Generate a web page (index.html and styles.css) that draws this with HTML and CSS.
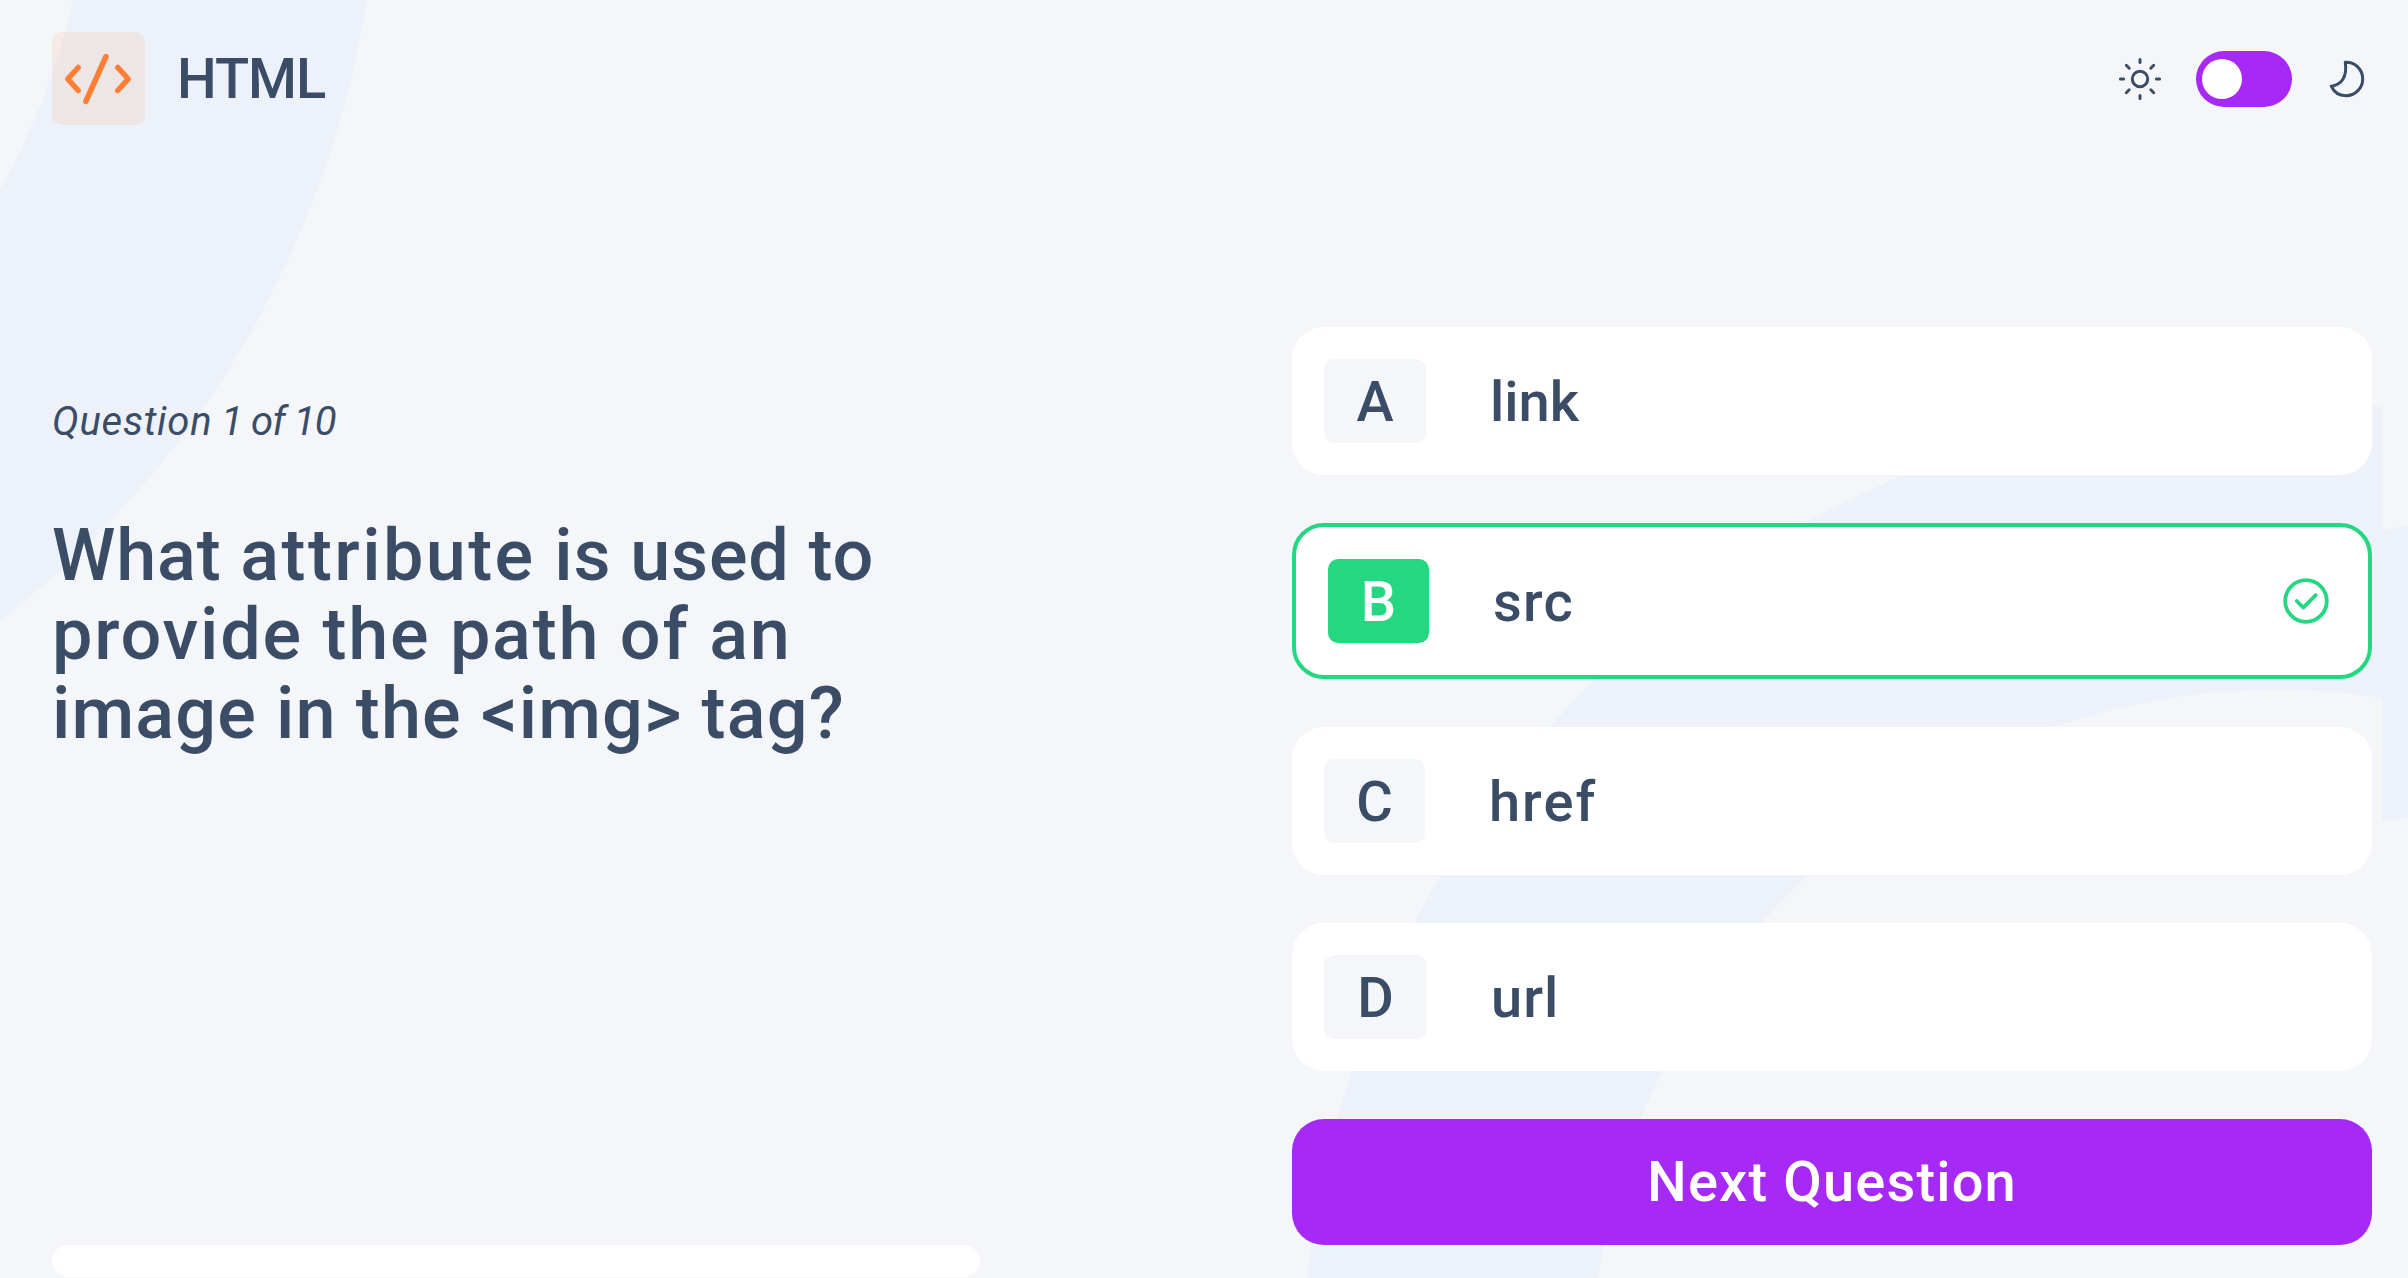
FILE: index.html
```
<!DOCTYPE html>
<html lang="en">
<head>
<meta charset="utf-8">
<title>Frontend Quiz</title>
<link rel="stylesheet" href="styles.css">
</head>
<body>
<svg class="backdrop" viewBox="0 0 2408 1278" aria-hidden="true">
  <defs>
    <clipPath id="tile"><rect width="2382" height="1278"/></clipPath>
    <clipPath id="next-tile"><rect x="2382" width="26" height="1278"/></clipPath>
  </defs>
  <g clip-path="url(#tile)">
    <circle cx="-595.5" cy="-149.8" r="829.5"/>
    <circle cx="2276.5" cy="1375" r="829.5"/>
  </g>
  <g clip-path="url(#next-tile)"><circle cx="2287" cy="-148.500" r="829.5"/></g>
</svg>
<div class="page">
  <header class="header">
    <div class="subject">
      <span class="subject-icon">
        <svg width="93" height="93" viewBox="0 0 93 93"><path d="M26.2 35.5 15.8 47l10.4 11.5M65.8 35.5 76.2 47 65.8 58.5M54 24.5 33.8 69.5"/></svg>
      </span>
      <span class="subject-name">HTML</span>
    </div>
    <div class="theme">
      <svg class="sun" width="48" height="48" viewBox="0 0 48 48"><circle cx="24" cy="24" r="7.7"/><path d="M24 4.4v3.2M24 40.4v3.2M4.4 24h3.2M40.4 24h3.2M10.3 10.3l2.9 2.9M34.8 34.8l2.9 2.9M10.3 37.7l2.9-2.9M34.8 13.2l2.9-2.9"/></svg>
      <button class="switch" aria-label="Toggle theme"><span class="knob"></span></button>
      <svg class="moon" width="48" height="48" viewBox="0 0 48 48"><path d="M23.3 7.3C33 6.8 40.700 14.500 40.700 24C40.700 33.500 33 40.700 24 40.700C17.500 40.700 11.800 37.200 9.300 31.200C19 30 25.500 22.500 23.300 7.300Z"/></svg>
    </div>
  </header>
  <main class="quiz">
    <section class="question">
      <div>
        <p class="counter"><span class="counter-word">Question</span> 1 of 10</p>
        <h1 class="prompt"><span class="l1">What <span class="wide">attribute</span> is used to</span><br><span class="l2">provide the path of an</span><br><span class="l3">image in the &lt;img&gt; tag?</span></h1>
      </div>
      <div class="progress"></div>
    </section>
    <section class="answers">
      <button class="answer"><span class="badge a">A</span><span class="label link">link</span></button>
      <button class="answer correct"><span class="badge b">B</span><span class="label src">src</span>
        <svg class="tick" width="48" height="48" viewBox="0 0 48 48"><circle cx="24" cy="24" r="20.800"/><path d="M14.700 24l6.600 6.600L33.700 18.200"/></svg>
      </button>
      <button class="answer"><span class="badge c">C</span><span class="label href">href</span></button>
      <button class="answer"><span class="badge d">D</span><span class="label url">url</span></button>
      <button class="next"><span>Next Question</span></button>
    </section>
  </main>
</div>
</body>
</html>
```
FILE: styles.css
```
* { box-sizing: border-box; }
body {
  margin: 0;
  background: #f4f6fa;
  color: #3b4d66;
  font-family: Roboto, "Liberation Sans", sans-serif;
  overflow: hidden;
}
button { border: 0; padding: 0; font: inherit; color: inherit; }
svg { display: block; fill: none; stroke-linecap: round; stroke-linejoin: round; }

.backdrop { position: absolute; inset: 0; width: 2408px; height: 1278px; z-index: -1; }
.backdrop circle { stroke: #edf1fa; stroke-width: 288.5; }

.page { width: 2408px; height: 1278px; padding: 32px 36px 1px 52px; display: flex; flex-direction: column; }
.header { display: flex; justify-content: space-between; align-items: center; height: 93px; }
.subject { display: flex; align-items: center; gap: 32px; }
.subject-icon { width: 93px; height: 93px; border-radius: 10px; background: rgba(255, 126, 53, 0.1); }
.subject-icon svg { stroke: #ff7e35; stroke-width: 5.5; }
.subject-name { font-size: 56px; font-weight: 500; line-height: 66px; letter-spacing: -1px; }
.theme { display: flex; align-items: center; gap: 32px; margin-right: 2px; }
.theme svg { stroke: #3b4d66; stroke-width: 3; }
.theme .moon { margin-left: -2px; }
.switch { width: 96px; height: 56px; border-radius: 28px; background: #a729f5; display: flex; align-items: center; padding-left: 6px; }
.knob { width: 40px; height: 40px; border-radius: 50%; background: #fff; }

.quiz { flex: 1; display: flex; justify-content: space-between; padding-top: 202px; }
.question { width: 928px; display: flex; flex-direction: column; justify-content: space-between; padding-top: 71px; }
.counter { margin: 0 0 71px; font-size: 40px; font-style: italic; line-height: 47px; letter-spacing: -0.9px; }
.counter-word { letter-spacing: 0.75px; }
.prompt { margin: 0; font-size: 72px; font-weight: 500; line-height: 79px; white-space: nowrap; }
.l1 { letter-spacing: 0.85px; }
.wide { letter-spacing: 2.4px; }
.l2 { letter-spacing: 1.75px; }
.l3 { letter-spacing: 1.15px; }
.progress { height: 32px; border-radius: 16px; background: #fff; }

.answers { width: 1080px; display: flex; flex-direction: column; gap: 48px; }
.answer { height: 148px; border-radius: 32px; background: #fff; padding: 0 32px; display: flex; align-items: center; font-size: 56px; font-weight: 500; }
.badge { width: 102px; height: 84px; padding-top: 1px; border-radius: 10px; background: #f4f6fa; display: grid; place-items: center; line-height: 66px; }
.label { margin-left: 64px; padding-top: 1px; line-height: 66px; }
.correct { height: 156px; border: 4px solid #26d782; }
.correct .badge { width: 101px; background: #26d782; color: #fff; }
.c { width: 101px; }
.d { width: 103px; }
.src { letter-spacing: 1.2px; }
.href { letter-spacing: 2px; }
.url { letter-spacing: 1px; }
.tick { margin-left: auto; margin-right: 6px; stroke: #26d782; stroke-width: 3.8; }
.next { height: 126px; border-radius: 32px; background: #a729f5; color: #fff; font-size: 56px; font-weight: 500; letter-spacing: 1.15px; }
```
